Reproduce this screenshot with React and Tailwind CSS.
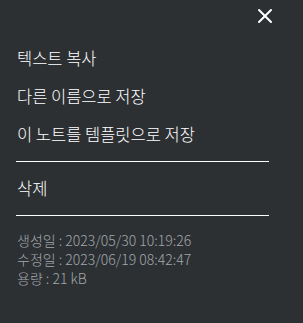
import { X } from 'lucide-react';

const items = ['텍스트 복사', '다른 이름으로 저장', '이 노트를 템플릿으로 저장'];

export default function App() {
  return (
    <div
      className="w-[303px] h-[323px] bg-[#2d3033] text-white relative overflow-hidden"
      style={{ fontFamily: '"Noto Sans CJK KR", "Noto Sans", sans-serif' }}
    >
      <button className="absolute left-[253px] top-[4px] w-[24px] h-[24px] flex items-center justify-center">
        <X size={24} strokeWidth={2} color="#ffffff" />
      </button>
      <div className="pl-[17px] pr-[34px] pt-[39px]">
        {items.map((label) => (
          <div key={label} className="h-[38px] flex items-center text-[16.5px] leading-none font-light">
            {label}
          </div>
        ))}
        <div className="mt-[8px] border-t border-white -ml-px" />
        <div className="h-[53px] flex items-center text-[16.5px] leading-none font-light">삭제</div>
        <div className="border-t border-white -ml-px" />
        <div className="pt-[15px] text-[14px] leading-[19px] text-[#a0a7ad] font-light">
          <div>생성일 : 2023/05/30 10:19:26</div>
          <div>수정일 : 2023/06/19 08:42:47</div>
          <div>용량 : 21 kB</div>
        </div>
      </div>
    </div>
  );
}
